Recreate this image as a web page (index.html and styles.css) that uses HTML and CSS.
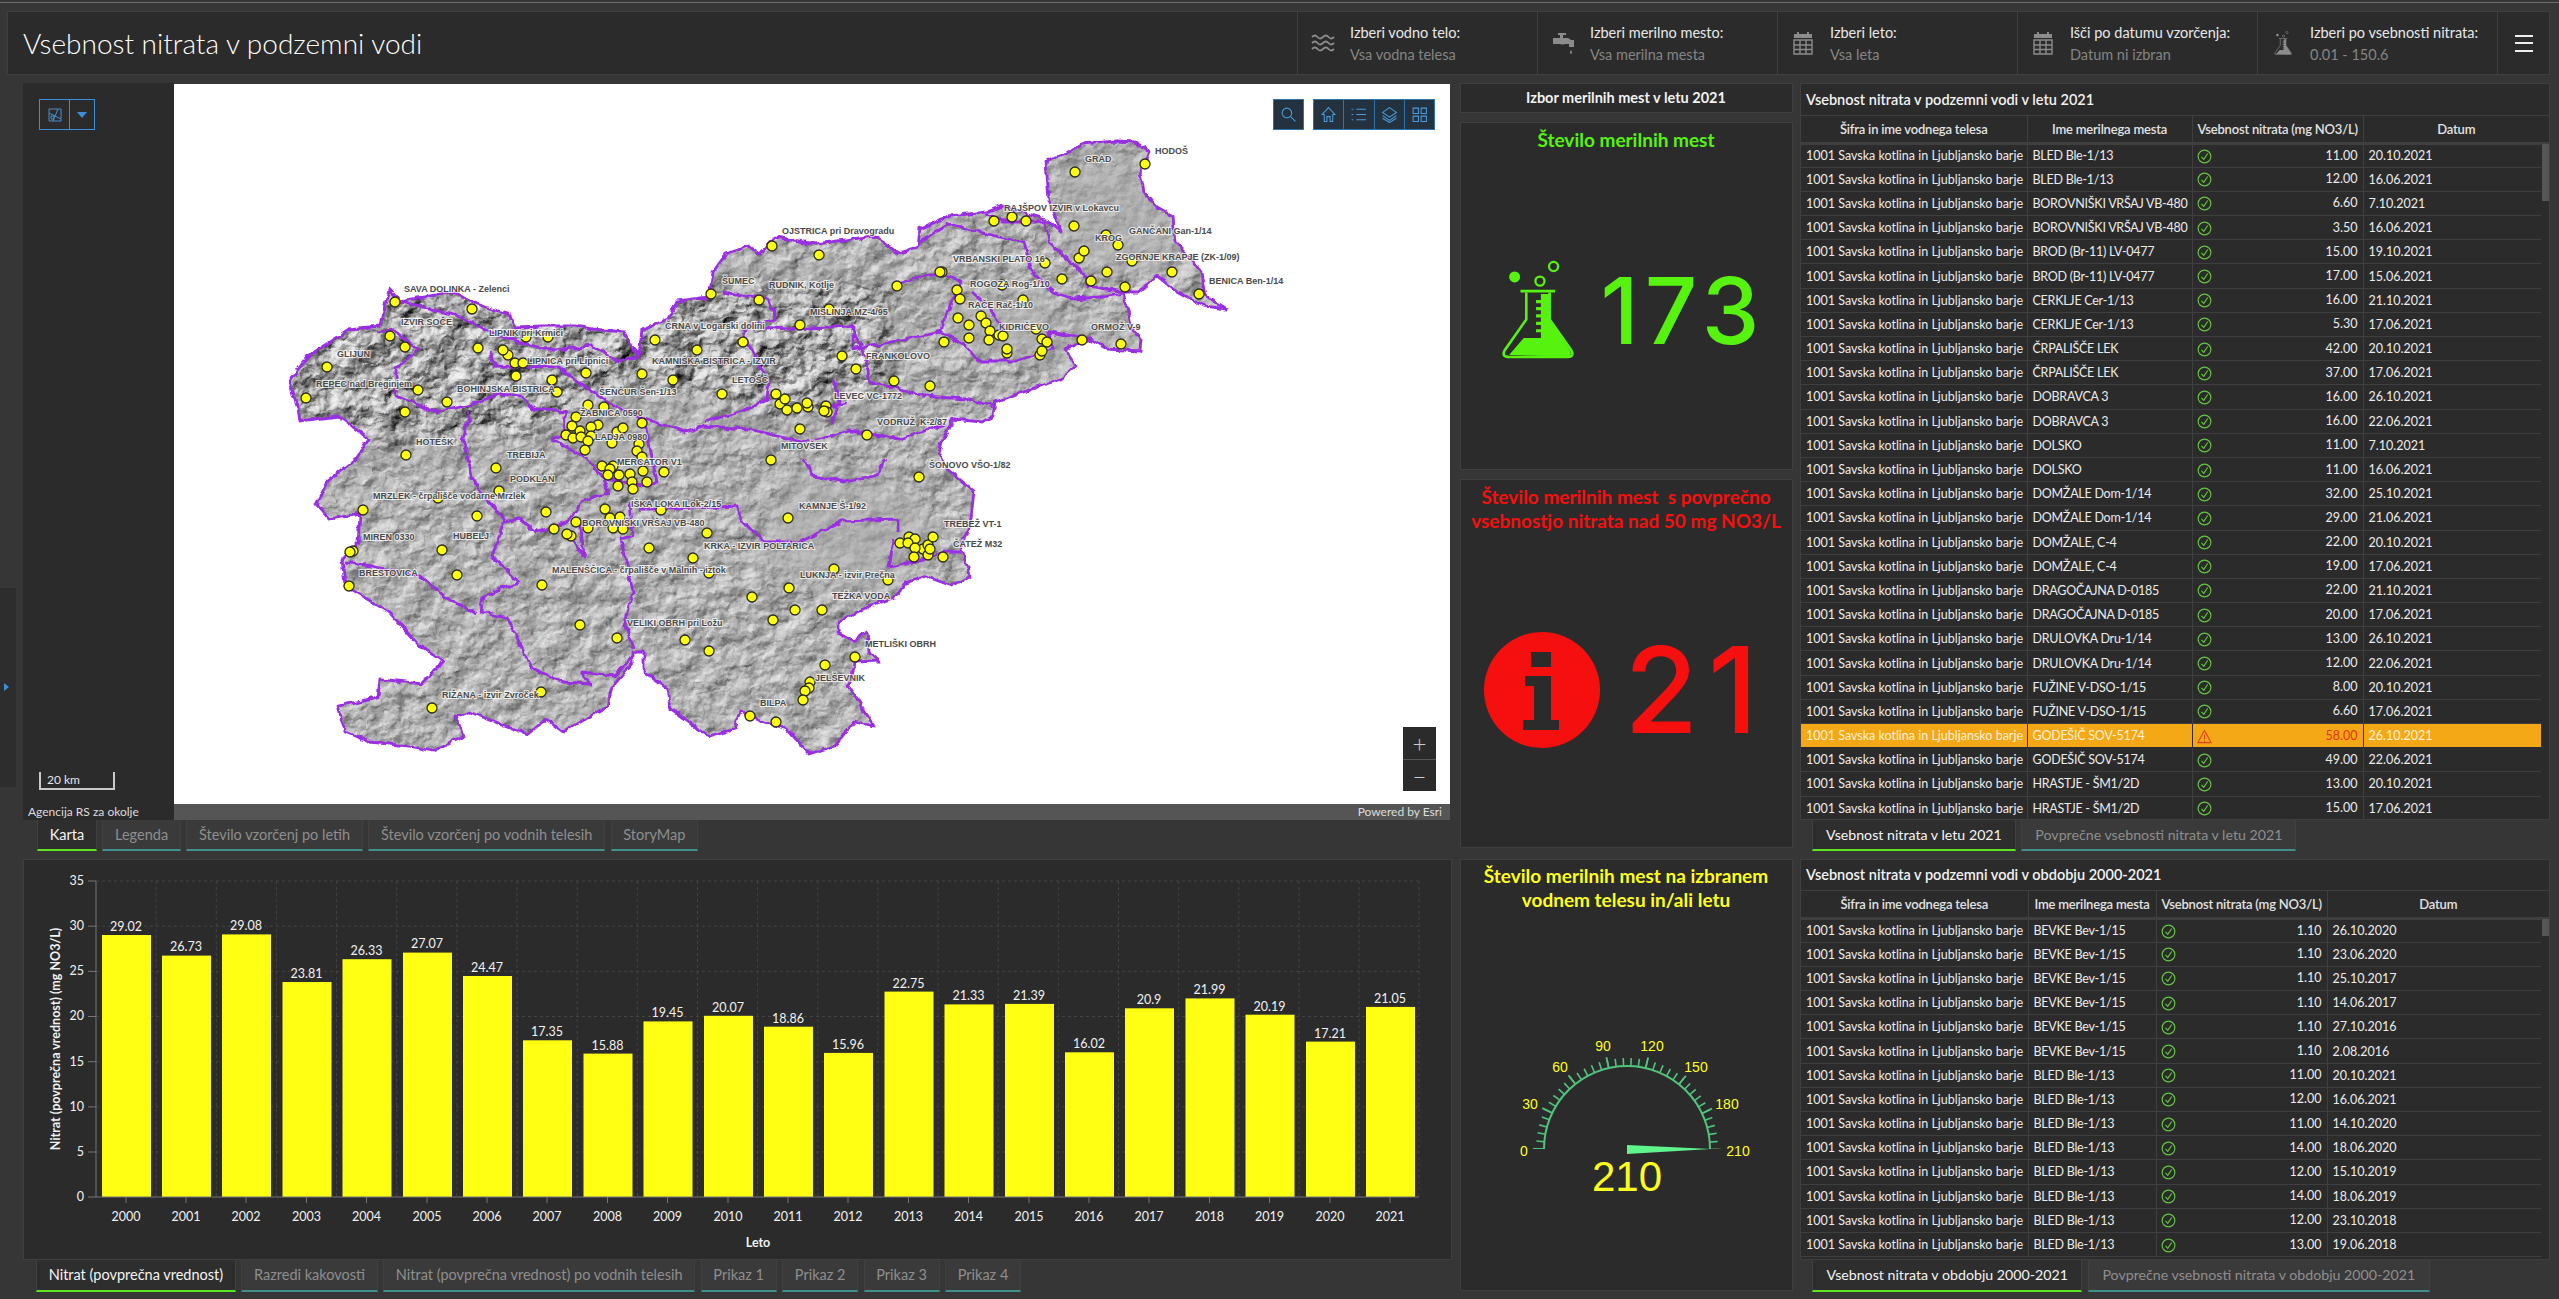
FILE: index.html
```html
<!DOCTYPE html>
<html lang="sl">
<head>
<meta charset="utf-8">
<title>Vsebnost nitrata v podzemni vodi</title>
<link rel="stylesheet" href="styles.css">
</head>
<body>
<svg class="defs" aria-hidden="true">
  <symbol id="ok" viewBox="0 0 16 16"><circle cx="8" cy="8" r="6.8" fill="none" stroke="#63c93b" stroke-width="1.2"/><path d="M4.800 8.400 7.200 11 11.400 4.800" fill="none" stroke="#63c93b" stroke-width="1.2"/></symbol>
  <symbol id="warn" viewBox="0 0 16 16"><path d="M8 1.500 15 14.500H1Z" fill="none" stroke="#e5401c" stroke-width="1.2"/><path d="M8 6v5M8 12v1.200" stroke="#e5401c" stroke-width="1.100"/></symbol>
  <symbol id="flask" viewBox="180 535 225 305">
    <circle cx="222" cy="587" r="17"/>
    <circle cx="342" cy="555" r="14" fill="none" stroke="currentColor" stroke-width="7"/>
    <circle cx="300" cy="600" r="14" fill="none" stroke="currentColor" stroke-width="7"/>
    <path d="M240 627H347V635H240Z"/>
    <path d="M258 635V718L192 812Q180 834 205 834H385Q408 834 396 812L330 718V635" fill="none" stroke="currentColor" stroke-width="8"/>
    <path d="M205 828 250 775H303V758H288V748H303V735H288V725H303V712H288V702H303V690H288V680H303V668H288V658H303V640H330V718L393 815Q400 832 385 832Z"/>
  </symbol>
  <symbol id="cal" viewBox="0 0 20 24"><path d="M1 9H19V23H1ZM1 14H19M1 18.500H19M7 9V23M13 9V23" fill="none" stroke="currentColor" stroke-width="1.400"/><path d="M1 3H4V1H6V3H14V1H16V3H19V7H1Z"/></symbol>
</svg>

<div class="topline"></div>

<header class="hdr">
  <h1 class="hdr-title">Vsebnost nitrata v podzemni vodi</h1>
  <div class="filter">
    <svg class="f-icon" viewBox="0 0 24 18"><path d="M1 3q3-3 5.500 0t5.500 0 5.500 0 5.500 0M1 9q3-3 5.500 0t5.500 0 5.500 0 5.500 0M1 15q3-3 5.500 0t5.500 0 5.500 0 5.500 0" fill="none" stroke="currentColor" stroke-width="1.800"/></svg>
    <div class="f-text"><span class="f-a">Izberi vodno telo:</span><span class="f-b">Vsa vodna telesa</span></div>
  </div>
  <div class="filter">
    <svg class="f-icon" viewBox="0 0 24 24"><path d="M7 2h8v2h-3v3h5l3 2h3v7h-5v-3h-4q-2 1-5 0H2V7h7V4H7Z"/><path d="M20 19q-2 3 0 4 2-1 0-4Z"/></svg>
    <div class="f-text"><span class="f-a">Izberi merilno mesto:</span><span class="f-b">Vsa merilna mesta</span></div>
  </div>
  <div class="filter">
    <svg class="f-icon"><use href="#cal"/></svg>
    <div class="f-text"><span class="f-a">Izberi leto:</span><span class="f-b">Vsa leta</span></div>
  </div>
  <div class="filter">
    <svg class="f-icon"><use href="#cal"/></svg>
    <div class="f-text"><span class="f-a">Išči po datumu vzorčenja:</span><span class="f-b">Datum ni izbran</span></div>
  </div>
  <div class="filter">
    <svg class="f-icon"><use href="#flask"/></svg>
    <div class="f-text"><span class="f-a">Izberi po vsebnosti nitrata:</span><span class="f-b">0.01 - 150.6</span></div>
  </div>
  <div class="menu"><i></i><i></i><i></i></div>
</header>

<div class="handle"><i></i></div>

<main class="main">
  <section class="col col-left">
    <div class="mapblock">
      <div class="mapside">
        <div class="scalebar">20 km</div>
      </div>
      <div class="mapview">
        <svg class="mapsvg" viewBox="174 85 1276 720" aria-label="Zemljevid Slovenije">
          <defs>
            <filter id="hill" color-interpolation-filters="sRGB" x="0" y="0" width="1" height="1"><feTurbulence type="fractalNoise" baseFrequency=".04 .05" numOctaves="4" seed="11" result="t"/><feDiffuseLighting in="t" surfaceScale="3.200" diffuseConstant=".95" lighting-color="#fff"><feDistantLight azimuth="225" elevation="47"/></feDiffuseLighting></filter>
            <filter id="hill2" color-interpolation-filters="sRGB" x="0" y="0" width="1" height="1"><feTurbulence type="fractalNoise" baseFrequency=".035 .045" numOctaves="4" seed="4" result="t"/><feDiffuseLighting in="t" surfaceScale="7" diffuseConstant=".95" lighting-color="#fff"><feDistantLight azimuth="225" elevation="45"/></feDiffuseLighting></filter>
            <filter id="wob" filterUnits="userSpaceOnUse" x="174" y="85" width="1276" height="720"><feTurbulence type="fractalNoise" baseFrequency=".12" numOctaves="2" seed="3" result="n"/><feDisplacementMap in="SourceGraphic" in2="n" scale="6" xChannelSelector="R" yChannelSelector="G"/></filter>
            <filter id="soft"><feGaussianBlur stdDeviation="14"/></filter>
            <path id="si" d="M389 290 400 302 454 293 476 305 508 315 514 328 543 327 575 327 592 330 624 333 633 350 639 357 642 330 668 320 677 302 709 298 713 273 726 255 749 247 760 255 775 238 816 245 874 237 898 254 918 248 920 230 949 217 987 213 1003 207 1045 220 1061 233 1049 203 1046 162 1069 153 1082 145 1117 142 1134 143 1149 153 1140 173 1144 193 1157 208 1173 217 1175 243 1192 260 1202 273 1206 297 1227 310 1204 307 1173 290 1157 277 1138 293 1123 293 1128 313 1132 330 1141 340 1140 352 1107 350 1090 340 1065 350 1076 367 1061 380 1032 390 995 403 993 417 982 423 953 420 943 440 939 453 947 470 974 492 970 527 961 547 970 577 952 587 925 577 903 585 898 597 863 610 838 623 838 633 854 642 867 633 869 652 880 662 854 663 849 687 874 727 854 723 834 747 809 755 787 730 764 723 740 712 735 730 709 738 671 710 668 690 644 673 644 653 633 653 633 663 613 687 608 707 563 733 546 720 528 735 505 727 470 713 456 717 463 737 432 752 409 747 369 743 345 733 338 707 378 698 380 680 421 685 443 663 416 643 389 613 345 587 342 560 358 543 360 515 329 520 316 505 327 483 356 460 369 440 338 417 300 422 298 410 289 383 307 358 349 330 380 327Z"/>
            <clipPath id="siclip"><use href="#si"/></clipPath>
            <mask id="alps" maskUnits="userSpaceOnUse" x="174" y="85" width="1276" height="720"><path class="mask-w" d="M280 280H900V390L800 430 640 390 520 450 360 450 280 420Z"/></mask>
          </defs>
          <g filter="url(#wob)">
            <g clip-path="url(#siclip)">
              <rect class="relief-a" x="270" y="130" width="980" height="640"/>
              <g mask="url(#alps)"><rect class="relief-b" x="270" y="130" width="980" height="640"/></g>
              <g class="plains">
                <path d="M950 300 1040 290 1055 330 1130 320 1110 350 1000 360 950 340Z"/>
                <path d="M1050 170 1140 150 1190 270 1080 270Z"/>
                <path d="M590 410 640 420 650 480 610 490 575 450Z"/>
                <path d="M780 480 880 480 940 530 870 600 760 560Z"/>
              </g>
            </g>
            <use class="border" href="#si"/>
            <path class="border" d="M400 302 458 317 499 337 521 343 543 350 566 350 592 347 619 363 637 358M490 353 494 367 557 368 592 393 615 407 644 420 686 433 704 427 749 430 802 443 850 432 900 440 945 425M378 333 392 330 418 350 396 370 396 397 436 413 476 405 499 395 521 397 534 410 566 413 561 437 552 440 588 460 604 480 648 487 657 483 644 420M470 413 463 440 472 477 483 497 505 520 492 557 519 583 483 597 481 613 508 620 532 670 563 683 590 685 581 673 615 677 633 657M345 563 371 567 421 577 443 597 476 615M503 523 519 520 537 533 568 523 581 503 608 493 604 480M572 540 584 558 580 520M630 503 633 537 621 540 628 570 633 593 624 623 633 650M640 510 671 510 738 507 740 520 764 543 800 543 842 522 898 520 898 533M894 540 889 568 916 563 943 553 961 553M804 460 813 477 845 483 876 477 885 460M722 293 769 300 776 320 747 327 744 337 769 383 767 400 744 412 704 423M747 327 789 330 851 327 865 357 870 383 924 397 966 400 993 407M897 285 924 277 941 275 962 283 945 317 941 333 854 350 854 327M941 333 966 347 978 362 1016 362 1053 350 1049 333 1090 340M920 243 949 225 999 238 1024 243 1032 273 1053 293 1074 300 1099 298 1123 293M987 215 1003 223 1045 223 1049 243 1082 273 1090 287 1123 293M972 293 991 310 1007 337M833 380 840 400 832 425M820 410 845 405"/>
          </g>
          <g class="pts">
            <circle cx="395" cy="303"/><circle cx="472" cy="310"/><circle cx="390" cy="337"/><circle cx="405" cy="348"/><circle cx="327" cy="368"/><circle cx="306" cy="399"/><circle cx="418" cy="391"/><circle cx="447" cy="403"/><circle cx="405" cy="413"/><circle cx="478" cy="349"/><circle cx="526" cy="338"/><circle cx="548" cy="338"/><circle cx="508" cy="356"/><circle cx="503" cy="351"/><circle cx="515" cy="364"/><circle cx="523" cy="364"/><circle cx="516" cy="377"/><circle cx="552" cy="381"/><circle cx="557" cy="393"/><circle cx="586" cy="374"/><circle cx="642" cy="375"/><circle cx="673" cy="381"/><circle cx="655" cy="341"/><circle cx="697" cy="351"/><circle cx="743" cy="343"/><circle cx="711" cy="295"/><circle cx="759" cy="301"/><circle cx="772" cy="247"/><circle cx="819" cy="256"/><circle cx="800" cy="326"/><circle cx="829" cy="310"/><circle cx="897" cy="287"/><circle cx="942" cy="273"/><circle cx="940" cy="273"/><circle cx="842" cy="357"/><circle cx="856" cy="370"/><circle cx="894" cy="382"/><circle cx="930" cy="387"/><circle cx="722" cy="395"/><circle cx="776" cy="395"/><circle cx="780" cy="405"/><circle cx="785" cy="400"/><circle cx="787" cy="411"/><circle cx="797" cy="409"/><circle cx="808" cy="408"/><circle cx="807" cy="404"/><circle cx="826" cy="407"/><circle cx="827" cy="413"/><circle cx="824" cy="412"/><circle cx="800" cy="430"/><circle cx="867" cy="436"/><circle cx="771" cy="461"/><circle cx="919" cy="478"/><circle cx="588" cy="406"/><circle cx="604" cy="408"/><circle cx="576" cy="418"/><circle cx="572" cy="427"/><circle cx="598" cy="426"/><circle cx="642" cy="424"/><circle cx="617" cy="433"/><circle cx="623" cy="429"/><circle cx="591" cy="428"/><circle cx="580" cy="432"/><circle cx="566" cy="436"/><circle cx="573" cy="439"/><circle cx="591" cy="437"/><circle cx="581" cy="438"/><circle cx="588" cy="442"/><circle cx="612" cy="444"/><circle cx="639" cy="445"/><circle cx="637" cy="452"/><circle cx="585" cy="451"/><circle cx="642" cy="458"/><circle cx="602" cy="467"/><circle cx="613" cy="467"/><circle cx="610" cy="470"/><circle cx="643" cy="472"/><circle cx="664" cy="473"/><circle cx="608" cy="476"/><circle cx="619" cy="476"/><circle cx="630" cy="475"/><circle cx="406" cy="456"/><circle cx="496" cy="469"/>
            <circle cx="1145" cy="165"/><circle cx="1075" cy="173"/><circle cx="994" cy="222"/><circle cx="1012" cy="218"/><circle cx="1026" cy="222"/><circle cx="1074" cy="227"/><circle cx="1106" cy="236"/><circle cx="1118" cy="246"/><circle cx="1079" cy="259"/><circle cx="1084" cy="252"/><circle cx="1045" cy="264"/><circle cx="1062" cy="280"/><circle cx="1091" cy="282"/><circle cx="1107" cy="273"/><circle cx="1132" cy="262"/><circle cx="1172" cy="273"/><circle cx="1125" cy="288"/><circle cx="1199" cy="295"/><circle cx="1002" cy="286"/><circle cx="957" cy="291"/><circle cx="960" cy="300"/><circle cx="1023" cy="301"/><circle cx="958" cy="319"/><circle cx="969" cy="326"/><circle cx="981" cy="317"/><circle cx="986" cy="324"/><circle cx="990" cy="332"/><circle cx="969" cy="339"/><circle cx="989" cy="341"/><circle cx="944" cy="343"/><circle cx="999" cy="336"/><circle cx="1003" cy="337"/><circle cx="1036" cy="330"/><circle cx="1042" cy="340"/><circle cx="1047" cy="343"/><circle cx="1007" cy="354"/><circle cx="1007" cy="350"/><circle cx="1040" cy="356"/><circle cx="1042" cy="352"/><circle cx="1082" cy="341"/><circle cx="1121" cy="345"/>
            <circle cx="632" cy="483"/><circle cx="647" cy="483"/><circle cx="618" cy="487"/><circle cx="633" cy="490"/><circle cx="499" cy="492"/><circle cx="438" cy="499"/><circle cx="363" cy="511"/><circle cx="477" cy="517"/><circle cx="546" cy="513"/><circle cx="605" cy="510"/><circle cx="661" cy="511"/><circle cx="610" cy="519"/><circle cx="620" cy="518"/><circle cx="576" cy="523"/><circle cx="554" cy="530"/><circle cx="571" cy="537"/><circle cx="567" cy="535"/><circle cx="588" cy="529"/><circle cx="613" cy="529"/><circle cx="623" cy="530"/><circle cx="649" cy="549"/><circle cx="707" cy="534"/><circle cx="788" cy="519"/><circle cx="693" cy="559"/><circle cx="709" cy="574"/><circle cx="834" cy="570"/><circle cx="888" cy="581"/><circle cx="789" cy="589"/><circle cx="752" cy="598"/><circle cx="795" cy="611"/><circle cx="822" cy="611"/><circle cx="773" cy="621"/><circle cx="855" cy="658"/><circle cx="825" cy="666"/><circle cx="810" cy="683"/><circle cx="809" cy="689"/><circle cx="805" cy="692"/><circle cx="803" cy="701"/><circle cx="776" cy="723"/><circle cx="750" cy="717"/><circle cx="685" cy="641"/><circle cx="709" cy="652"/><circle cx="617" cy="639"/><circle cx="580" cy="626"/><circle cx="542" cy="586"/><circle cx="457" cy="576"/><circle cx="442" cy="551"/><circle cx="353" cy="552"/><circle cx="350" cy="553"/><circle cx="349" cy="587"/><circle cx="432" cy="709"/><circle cx="541" cy="693"/>
            <circle cx="900" cy="544"/><circle cx="909" cy="538"/><circle cx="915" cy="540"/><circle cx="908" cy="544"/><circle cx="923" cy="550"/><circle cx="915" cy="549"/><circle cx="928" cy="546"/><circle cx="933" cy="538"/><circle cx="928" cy="556"/><circle cx="930" cy="550"/><circle cx="914" cy="558"/><circle cx="943" cy="558"/>
          </g>
          <g class="lbl">
            <text x="404" y="293">SAVA DOLINKA - Zelenci</text><text x="401" y="326">IZVIR SOČE</text><text x="337" y="358">GLIJUN</text><text x="316" y="388">REPEC nad Breginjem</text><text x="489" y="337">LIPNIK pri Krmici</text><text x="527" y="365">LIPNICA pri Lipnici</text><text x="457" y="393">BOHINJSKA BISTRICA</text><text x="665" y="330">ČRNA v Logarski dolini</text><text x="652" y="365">KAMNIŠKA BISTRICA - IZVIR</text><text x="722" y="285">ŠUMEC</text><text x="769" y="289">RUDNIK, Kotlje</text><text x="782" y="235">OJSTRICA pri Dravogradu</text><text x="810" y="316">MISLINJA MZ-4/95</text><text x="732" y="384">LETOŠČ</text><text x="866" y="360">FRANKOLOVO</text><text x="834" y="400">LEVEC VC-1772</text><text x="877" y="426">VODRUŽ  K-2/87</text><text x="781" y="450">MITOVŠEK</text><text x="599" y="396">ŠENČUR Šen-1/13</text><text x="580" y="417">ŽABNICA 0590</text><text x="595" y="441">LADJA 0980</text><text x="617" y="466">MERCATOR V1</text><text x="416" y="446">HOTEŠK</text><text x="507" y="459">TREBIJA</text><text x="510" y="483">PODKLAN</text><text x="929" y="469">ŠONOVO VŠO-1/82</text>
            <text x="1155" y="155">HODOŠ</text><text x="1085" y="163">GRAD</text><text x="1004" y="212">RAJŠPOV IZVIR v Lokavcu</text><text x="1095" y="242">KROG</text><text x="1129" y="235">GANČANI Gan-1/14</text><text x="953" y="263">VRBANSKI PLATO 16</text><text x="1116" y="261">ZGORNJE KRAPJE (ZK-1/09)</text><text x="970" y="288">ROGOZA Rog-1/10</text><text x="1209" y="285">BENICA Ben-1/14</text><text x="968" y="309">RAČE Rač-1/10</text><text x="999" y="331">KIDRIČEVO</text><text x="1091" y="331">ORMOŽ V-9</text>
            <text x="373" y="500">MRZLEK - črpališče vodarne Mrzlek</text><text x="631" y="508">IŠKA LOKA ILok-2/15</text><text x="799" y="510">KAMNJE Š-1/92</text><text x="582" y="527">BOROVNIŠKI VRŠAJ VB-480</text><text x="944" y="528">TREBEŽ VT-1</text><text x="363" y="541">MIREN 0330</text><text x="453" y="540">HUBELJ</text><text x="704" y="550">KRKA - IZVIR POLTARICA</text><text x="953" y="548">ČATEŽ M32</text><text x="359" y="577">BRESTOVICA</text><text x="552" y="574">MALENŠČICA - črpališče v Malnih - iztok</text><text x="800" y="579">LUKNJA - izvir Prečna</text><text x="832" y="600">TEŽKA VODA</text><text x="627" y="627">VELIKI OBRH pri Ložu</text><text x="865" y="648">METLIŠKI OBRH</text><text x="815" y="682">JELŠEVNIK</text><text x="442" y="699">RIŽANA - izvir Zvroček</text><text x="760" y="707">BILPA</text>
          </g>
        </svg>
        <div class="tb tb-search">
          <span class="tb-cell"><svg viewBox="0 0 16 16"><circle cx="6.500" cy="6.500" r="4.500"/><path d="M10 10l4.500 4.500"/></svg></span>
        </div>
        <div class="tb tb-main">
          <span class="tb-cell"><svg viewBox="0 0 16 16"><path d="M8 1.500 14 8h-2v6.500H9.500V10h-3v4.500H4V8H2Z"/></svg></span>
          <span class="tb-cell"><svg viewBox="0 0 16 16"><path d="M6 3h9M6 8h9M6 13h9M1.500 3h1.500M1.500 8h1.500M1.500 13h1.500"/></svg></span>
          <span class="tb-cell"><svg viewBox="0 0 16 16"><path d="M8 1.500 14.500 6 8 10.500 1.500 6ZM1.500 9 8 13.500 14.500 9M1.500 11.500 8 15.500 14.500 11.500"/></svg></span>
          <span class="tb-cell"><svg viewBox="0 0 16 16"><path d="M2 2h5v5H2ZM9.500 2h5v5h-5ZM2 9.500h5v5H2ZM9.500 9.500h5v5h-5Z"/></svg></span>
        </div>
        <div class="zoomctl"><span>+</span><span>−</span></div>
      </div>
      <div class="tb-left">
        <span class="tbl-a"><svg viewBox="0 0 16 16"><path d="M2 2h12v12H2ZM2 6l12 6M6 14 11 2M4 9h3v3H4Z"/></svg></span>
        <span class="tbl-b"></span>
      </div>
      <div class="attrib-a">Agencija RS za okolje</div>
      <div class="attrib-b">Powered by Esri</div>
    </div>
    <nav class="tabs tabs-map">
      <span class="tab on">Karta</span><span class="tab">Legenda</span><span class="tab">Število vzorčenj po letih</span><span class="tab">Število vzorčenj po vodnih telesih</span><span class="tab">StoryMap</span>
    </nav>
    <div class="panel chartpanel">
      <svg class="chart" viewBox="23 860 1429 401">
        <g class="grid">
          <path d="M96 882H1419M96 927.200H1419M96 972.400H1419M96 1017.500H1419M96 1062.700H1419M96 1107.900H1419M96 1153H1419"/>
          <path d="M156.100 882V1198M216.300 882V1198M276.400 882V1198M336.600 882V1198M396.700 882V1198M456.900 882V1198M517 882V1198M577.200 882V1198M637.300 882V1198M697.500 882V1198M757.600 882V1198M817.800 882V1198M877.900 882V1198M938.100 882V1198M998.200 882V1198M1058.400 882V1198M1118.500 882V1198M1178.700 882V1198M1238.800 882V1198M1299 882V1198M1359.100 882V1198M1419 882V1198"/>
        </g>
        <g class="bars">
          <rect x="102" y="936" width="49" height="262"/><rect x="162" y="956.600" width="49" height="241.400"/><rect x="222" y="935.400" width="49" height="262.600"/><rect x="282.500" y="983" width="49" height="215"/><rect x="342.500" y="960.200" width="49" height="237.800"/><rect x="403" y="953.600" width="49" height="244.400"/><rect x="463" y="977" width="49" height="221"/><rect x="523" y="1041.300" width="49" height="156.700"/><rect x="583.500" y="1054.600" width="49" height="143.400"/><rect x="643.500" y="1022.400" width="49" height="175.600"/><rect x="704" y="1016.800" width="49" height="181.200"/><rect x="764" y="1027.700" width="49" height="170.300"/><rect x="824" y="1053.900" width="49" height="144.100"/><rect x="884.500" y="992.600" width="49" height="205.400"/><rect x="944.500" y="1005.400" width="49" height="192.600"/><rect x="1005" y="1004.900" width="49" height="193.100"/><rect x="1065" y="1053.300" width="49" height="144.700"/><rect x="1125" y="1009.300" width="49" height="188.700"/><rect x="1185.500" y="999.400" width="49" height="198.600"/><rect x="1245.500" y="1015.700" width="49" height="182.300"/><rect x="1306" y="1042.600" width="49" height="155.400"/><rect x="1366" y="1007.900" width="49" height="190.100"/>
        </g>
        <path class="axis" d="M96 882V1198H1419M88 882H96M88 927.200H96M88 972.400H96M88 1017.500H96M88 1062.700H96M88 1107.900H96M88 1153H96M88 1198H96M126 1198v6M186 1198v6M246 1198v6M306.500 1198v6M366.500 1198v6M427 1198v6M487 1198v6M547 1198v6M607.500 1198v6M667.500 1198v6M728 1198v6M788 1198v6M848 1198v6M908.500 1198v6M968.500 1198v6M1029 1198v6M1089 1198v6M1149 1198v6M1209.500 1198v6M1269.500 1198v6M1330 1198v6M1390 1198v6"/>
        <g class="vals">
          <text x="126" y="932">29.02</text><text x="186" y="952">26.73</text><text x="246" y="931">29.08</text><text x="306.500" y="979">23.81</text><text x="366.500" y="956">26.33</text><text x="427" y="949">27.07</text><text x="487" y="973">24.47</text><text x="547" y="1037">17.35</text><text x="607.500" y="1051">15.88</text><text x="667.500" y="1018">19.45</text><text x="728" y="1013">20.07</text><text x="788" y="1024">18.86</text><text x="848" y="1050">15.96</text><text x="908.500" y="989">22.75</text><text x="968.500" y="1001">21.33</text><text x="1029" y="1001">21.39</text><text x="1089" y="1049">16.02</text><text x="1149" y="1005">20.9</text><text x="1209.500" y="995">21.99</text><text x="1269.500" y="1012">20.19</text><text x="1330" y="1039">17.21</text><text x="1390" y="1004">21.05</text>
        </g>
        <g class="yl">
          <text x="84" y="886">35</text><text x="84" y="931">30</text><text x="84" y="976">25</text><text x="84" y="1021">20</text><text x="84" y="1067">15</text><text x="84" y="1112">10</text><text x="84" y="1157">5</text><text x="84" y="1202">0</text>
        </g>
        <g class="xl">
          <text x="126" y="1222">2000</text><text x="186" y="1222">2001</text><text x="246" y="1222">2002</text><text x="306.500" y="1222">2003</text><text x="366.500" y="1222">2004</text><text x="427" y="1222">2005</text><text x="487" y="1222">2006</text><text x="547" y="1222">2007</text><text x="607.500" y="1222">2008</text><text x="667.500" y="1222">2009</text><text x="728" y="1222">2010</text><text x="788" y="1222">2011</text><text x="848" y="1222">2012</text><text x="908.500" y="1222">2013</text><text x="968.500" y="1222">2014</text><text x="1029" y="1222">2015</text><text x="1089" y="1222">2016</text><text x="1149" y="1222">2017</text><text x="1209.500" y="1222">2018</text><text x="1269.500" y="1222">2019</text><text x="1330" y="1222">2020</text><text x="1390" y="1222">2021</text>
        </g>
        <text class="axt" x="758" y="1248">Leto</text>
        <text class="axt" transform="translate(60 1040) rotate(-90)">Nitrat (povprečna vrednost) (mg NO3/L)</text>
      </svg>
    </div>
    <nav class="tabs tabs-chart">
      <span class="tab on">Nitrat (povprečna vrednost)</span><span class="tab">Razredi kakovosti</span><span class="tab">Nitrat (povprečna vrednost) po vodnih telesih</span><span class="tab">Prikaz 1</span><span class="tab">Prikaz 2</span><span class="tab">Prikaz 3</span><span class="tab">Prikaz 4</span>
    </nav>
  </section>

  <section class="col col-mid">
    <div class="panel izbor">Izbor merilnih mest v letu 2021</div>
    <div class="panel stat stat-green">
      <h2 class="stat-title">Število merilnih mest</h2>
      <div class="stat-body">
        <svg class="stat-icon flask"><use href="#flask"/></svg>
        <span class="num num-green">173</span>
      </div>
    </div>
    <div class="panel stat stat-red">
      <h2 class="stat-title">Število merilnih mest  s povprečno
vsebnostjo nitrata nad 50 mg NO3/L</h2>
      <div class="stat-body">
        <svg class="stat-icon info" viewBox="0 0 116 116"><circle cx="58" cy="58" r="58"/><path class="info-i" d="M47 20h20v15H47ZM41 44h26v44h8v10H39V88h11V54H41Z"/></svg>
        <span class="num num-red">21</span>
      </div>
    </div>
    <div class="panel stat stat-yellow">
      <h2 class="stat-title">Število merilnih mest na izbranem
vodnem telesu in/ali letu</h2>
      <svg class="gauge" viewBox="1461 1030 331 170">
        <path class="g-arc" d="M1544 1150A83 83 0 0 1 1710 1150"/>
        <path class="g-minor" d="M1540 1150A87 87 0 0 1 1714 1150"/>
        <path class="g-major" d="M1538.500 1150A88.500 88.500 0 0 1 1715.500 1150"/>
        <path class="g-needle" d="M1627 1146 1711 1150 1627 1155Z"/>
        <g class="g-lab">
          <text x="1524" y="1157">0</text><text x="1530" y="1110">30</text><text x="1560" y="1073">60</text><text x="1603" y="1052">90</text><text x="1652" y="1052">120</text><text x="1696" y="1073">150</text><text x="1727" y="1110">180</text><text x="1738" y="1157">210</text>
        </g>
        <text class="g-val" x="1627" y="1192">210</text>
      </svg>
    </div>
  </section>

  <section class="col col-right">
    <div class="panel tpanel tpanel-a">
      <h3 class="tp-title">Vsebnost nitrata v podzemni vodi v letu 2021</h3>
      <div class="scroll"><i></i></div>
      <table class="dt dt-a">
        <thead><tr><th>Šifra in ime vodnega telesa</th><th>Ime merilnega mesta</th><th>Vsebnost nitrata (mg NO3/L)</th><th>Datum</th></tr></thead>
        <tbody>
          <tr><td>1001 Savska kotlina in Ljubljansko barje</td><td>BLED Ble-1/13</td><td class="v"><svg class="ic"><use href="#ok"/></svg>11.00</td><td>20.10.2021</td></tr>
          <tr><td>1001 Savska kotlina in Ljubljansko barje</td><td>BLED Ble-1/13</td><td class="v"><svg class="ic"><use href="#ok"/></svg>12.00</td><td>16.06.2021</td></tr>
          <tr><td>1001 Savska kotlina in Ljubljansko barje</td><td>BOROVNIŠKI VRŠAJ VB-480</td><td class="v"><svg class="ic"><use href="#ok"/></svg>6.60</td><td>7.10.2021</td></tr>
          <tr><td>1001 Savska kotlina in Ljubljansko barje</td><td>BOROVNIŠKI VRŠAJ VB-480</td><td class="v"><svg class="ic"><use href="#ok"/></svg>3.50</td><td>16.06.2021</td></tr>
          <tr><td>1001 Savska kotlina in Ljubljansko barje</td><td>BROD (Br-11) LV-0477</td><td class="v"><svg class="ic"><use href="#ok"/></svg>15.00</td><td>19.10.2021</td></tr>
          <tr><td>1001 Savska kotlina in Ljubljansko barje</td><td>BROD (Br-11) LV-0477</td><td class="v"><svg class="ic"><use href="#ok"/></svg>17.00</td><td>15.06.2021</td></tr>
          <tr><td>1001 Savska kotlina in Ljubljansko barje</td><td>CERKLJE Cer-1/13</td><td class="v"><svg class="ic"><use href="#ok"/></svg>16.00</td><td>21.10.2021</td></tr>
          <tr><td>1001 Savska kotlina in Ljubljansko barje</td><td>CERKLJE Cer-1/13</td><td class="v"><svg class="ic"><use href="#ok"/></svg>5.30</td><td>17.06.2021</td></tr>
          <tr><td>1001 Savska kotlina in Ljubljansko barje</td><td>ČRPALIŠČE LEK</td><td class="v"><svg class="ic"><use href="#ok"/></svg>42.00</td><td>20.10.2021</td></tr>
          <tr><td>1001 Savska kotlina in Ljubljansko barje</td><td>ČRPALIŠČE LEK</td><td class="v"><svg class="ic"><use href="#ok"/></svg>37.00</td><td>17.06.2021</td></tr>
          <tr><td>1001 Savska kotlina in Ljubljansko barje</td><td>DOBRAVCA 3</td><td class="v"><svg class="ic"><use href="#ok"/></svg>16.00</td><td>26.10.2021</td></tr>
          <tr><td>1001 Savska kotlina in Ljubljansko barje</td><td>DOBRAVCA 3</td><td class="v"><svg class="ic"><use href="#ok"/></svg>16.00</td><td>22.06.2021</td></tr>
          <tr><td>1001 Savska kotlina in Ljubljansko barje</td><td>DOLSKO</td><td class="v"><svg class="ic"><use href="#ok"/></svg>11.00</td><td>7.10.2021</td></tr>
          <tr><td>1001 Savska kotlina in Ljubljansko barje</td><td>DOLSKO</td><td class="v"><svg class="ic"><use href="#ok"/></svg>11.00</td><td>16.06.2021</td></tr>
          <tr><td>1001 Savska kotlina in Ljubljansko barje</td><td>DOMŽALE Dom-1/14</td><td class="v"><svg class="ic"><use href="#ok"/></svg>32.00</td><td>25.10.2021</td></tr>
          <tr><td>1001 Savska kotlina in Ljubljansko barje</td><td>DOMŽALE Dom-1/14</td><td class="v"><svg class="ic"><use href="#ok"/></svg>29.00</td><td>21.06.2021</td></tr>
          <tr><td>1001 Savska kotlina in Ljubljansko barje</td><td>DOMŽALE, C-4</td><td class="v"><svg class="ic"><use href="#ok"/></svg>22.00</td><td>20.10.2021</td></tr>
          <tr><td>1001 Savska kotlina in Ljubljansko barje</td><td>DOMŽALE, C-4</td><td class="v"><svg class="ic"><use href="#ok"/></svg>19.00</td><td>17.06.2021</td></tr>
          <tr><td>1001 Savska kotlina in Ljubljansko barje</td><td>DRAGOČAJNA D-0185</td><td class="v"><svg class="ic"><use href="#ok"/></svg>22.00</td><td>21.10.2021</td></tr>
          <tr><td>1001 Savska kotlina in Ljubljansko barje</td><td>DRAGOČAJNA D-0185</td><td class="v"><svg class="ic"><use href="#ok"/></svg>20.00</td><td>17.06.2021</td></tr>
          <tr><td>1001 Savska kotlina in Ljubljansko barje</td><td>DRULOVKA Dru-1/14</td><td class="v"><svg class="ic"><use href="#ok"/></svg>13.00</td><td>26.10.2021</td></tr>
          <tr><td>1001 Savska kotlina in Ljubljansko barje</td><td>DRULOVKA Dru-1/14</td><td class="v"><svg class="ic"><use href="#ok"/></svg>12.00</td><td>22.06.2021</td></tr>
          <tr><td>1001 Savska kotlina in Ljubljansko barje</td><td>FUŽINE V-DSO-1/15</td><td class="v"><svg class="ic"><use href="#ok"/></svg>8.00</td><td>20.10.2021</td></tr>
          <tr><td>1001 Savska kotlina in Ljubljansko barje</td><td>FUŽINE V-DSO-1/15</td><td class="v"><svg class="ic"><use href="#ok"/></svg>6.60</td><td>17.06.2021</td></tr>
          <tr class="hot"><td>1001 Savska kotlina in Ljubljansko barje</td><td>GODEŠIČ SOV-5174</td><td class="v"><svg class="ic"><use href="#warn"/></svg>58.00</td><td>26.10.2021</td></tr>
          <tr><td>1001 Savska kotlina in Ljubljansko barje</td><td>GODEŠIČ SOV-5174</td><td class="v"><svg class="ic"><use href="#ok"/></svg>49.00</td><td>22.06.2021</td></tr>
          <tr><td>1001 Savska kotlina in Ljubljansko barje</td><td>HRASTJE - ŠM1/2D</td><td class="v"><svg class="ic"><use href="#ok"/></svg>13.00</td><td>20.10.2021</td></tr>
          <tr><td>1001 Savska kotlina in Ljubljansko barje</td><td>HRASTJE - ŠM1/2D</td><td class="v"><svg class="ic"><use href="#ok"/></svg>15.00</td><td>17.06.2021</td></tr>
        </tbody>
      </table>
    </div>
    <nav class="tabs tabs-ta">
      <span class="tab on">Vsebnost nitrata v letu 2021</span><span class="tab">Povprečne vsebnosti nitrata v letu 2021</span>
    </nav>
    <div class="panel tpanel tpanel-b">
      <h3 class="tp-title">Vsebnost nitrata v podzemni vodi v obdobju 2000-2021</h3>
      <div class="scroll scroll-b"><i></i></div>
      <table class="dt dt-b">
        <thead><tr><th>Šifra in ime vodnega telesa</th><th>Ime merilnega mesta</th><th>Vsebnost nitrata (mg NO3/L)</th><th>Datum</th></tr></thead>
        <tbody>
          <tr><td>1001 Savska kotlina in Ljubljansko barje</td><td>BEVKE Bev-1/15</td><td class="v"><svg class="ic"><use href="#ok"/></svg>1.10</td><td>26.10.2020</td></tr>
          <tr><td>1001 Savska kotlina in Ljubljansko barje</td><td>BEVKE Bev-1/15</td><td class="v"><svg class="ic"><use href="#ok"/></svg>1.10</td><td>23.06.2020</td></tr>
          <tr><td>1001 Savska kotlina in Ljubljansko barje</td><td>BEVKE Bev-1/15</td><td class="v"><svg class="ic"><use href="#ok"/></svg>1.10</td><td>25.10.2017</td></tr>
          <tr><td>1001 Savska kotlina in Ljubljansko barje</td><td>BEVKE Bev-1/15</td><td class="v"><svg class="ic"><use href="#ok"/></svg>1.10</td><td>14.06.2017</td></tr>
          <tr><td>1001 Savska kotlina in Ljubljansko barje</td><td>BEVKE Bev-1/15</td><td class="v"><svg class="ic"><use href="#ok"/></svg>1.10</td><td>27.10.2016</td></tr>
          <tr><td>1001 Savska kotlina in Ljubljansko barje</td><td>BEVKE Bev-1/15</td><td class="v"><svg class="ic"><use href="#ok"/></svg>1.10</td><td>2.08.2016</td></tr>
          <tr><td>1001 Savska kotlina in Ljubljansko barje</td><td>BLED Ble-1/13</td><td class="v"><svg class="ic"><use href="#ok"/></svg>11.00</td><td>20.10.2021</td></tr>
          <tr><td>1001 Savska kotlina in Ljubljansko barje</td><td>BLED Ble-1/13</td><td class="v"><svg class="ic"><use href="#ok"/></svg>12.00</td><td>16.06.2021</td></tr>
          <tr><td>1001 Savska kotlina in Ljubljansko barje</td><td>BLED Ble-1/13</td><td class="v"><svg class="ic"><use href="#ok"/></svg>11.00</td><td>14.10.2020</td></tr>
          <tr><td>1001 Savska kotlina in Ljubljansko barje</td><td>BLED Ble-1/13</td><td class="v"><svg class="ic"><use href="#ok"/></svg>14.00</td><td>18.06.2020</td></tr>
          <tr><td>1001 Savska kotlina in Ljubljansko barje</td><td>BLED Ble-1/13</td><td class="v"><svg class="ic"><use href="#ok"/></svg>12.00</td><td>15.10.2019</td></tr>
          <tr><td>1001 Savska kotlina in Ljubljansko barje</td><td>BLED Ble-1/13</td><td class="v"><svg class="ic"><use href="#ok"/></svg>14.00</td><td>18.06.2019</td></tr>
          <tr><td>1001 Savska kotlina in Ljubljansko barje</td><td>BLED Ble-1/13</td><td class="v"><svg class="ic"><use href="#ok"/></svg>12.00</td><td>23.10.2018</td></tr>
          <tr><td>1001 Savska kotlina in Ljubljansko barje</td><td>BLED Ble-1/13</td><td class="v"><svg class="ic"><use href="#ok"/></svg>13.00</td><td>19.06.2018</td></tr>
        </tbody>
      </table>
    </div>
    <nav class="tabs tabs-tb">
      <span class="tab on">Vsebnost nitrata v obdobju 2000-2021</span><span class="tab">Povprečne vsebnosti nitrata v obdobju 2000-2021</span>
    </nav>
  </section>
</main>
</body>
</html>
```

FILE: styles.css
```css
* { box-sizing: border-box; }
html, body { margin: 0; height: 1299px; overflow: hidden; }
body {
  position: relative;
  background: #363636;
  color: #fff;
  font-family: "Lato", "Noto Sans", sans-serif;
  padding-top: 2px;
}
.defs { position: absolute; width: 0; height: 0; }
.topline { height: 1px; background: #6c6c6c; }

/* header */
.hdr {
  display: flex;
  height: 64px;
  margin: 8px 9px 0 7px;
  background: #2b2b2b;
  border: 1px solid #3f3f3f;
}
.hdr-title {
  flex: 1;
  margin: 0;
  padding-left: 15px;
  align-self: center;
  font-size: 28px;
  font-weight: 300;
  color: #fff;
}
.filter {
  display: flex;
  align-items: center;
  width: 240px;
  border-left: 1px solid #3f3f3f;
}
.f-icon {
  width: 24px;
  height: 24px;
  margin: 0 15px 0 13px;
  color: #8c8c8c;
  fill: currentColor;
}
.f-text { display: flex; flex-direction: column; gap: 5px; font-size: 14.500px; white-space: nowrap; }
.f-a { color: #e8e8e8; }
.f-b { color: #858585; }
.menu {
  width: 52px;
  border-left: 1px solid #3f3f3f;
  display: flex;
  flex-direction: column;
  align-items: center;
  justify-content: center;
  gap: 5.500px;
}
.menu i { width: 18px; height: 2px; background: #eee; }

/* left edge handle */
.handle {
  position: absolute;
  left: 0;
  top: 588px;
  width: 16px;
  height: 199px;
  background: #2d2d2d;
}
.handle i {
  position: absolute;
  left: 4px;
  top: 95px;
  border-left: 5px solid #3a90d8;
  border-top: 4px solid transparent;
  border-bottom: 4px solid transparent;
}

/* layout */
.main {
  display: grid;
  grid-template-columns: 1429px 333px 750px;
  column-gap: 7.500px;
  margin: 8px 0 0 23px;
}
.col { display: flex; flex-direction: column; }
.panel {
  background: #2b2b2b;
  border: 1px solid #3f3f3f;
}

/* map */
.mapblock {
  position: relative;
  display: grid;
  grid-template-columns: 151px 1276px;
  grid-template-rows: 721px 16px;
  height: 737px;
}
.mapside { position: relative; background: #2b2b2b; grid-row: 1; }
.mapview { position: relative; background: #fff; margin-top: 1px; height: 720px; }
.mapsvg { display: block; width: 1276px; height: 720px; }
.relief-a { filter: url(#hill); }
.relief-b { filter: url(#hill2); }
.mask-w { fill: #fff; filter: url(#soft); }
.plains path { fill: #aeaeae; opacity: .6; filter: url(#soft); }
.border { fill: none; stroke: #9a2fe2; stroke-width: 2.800; stroke-linejoin: round; }
.pts circle { r: 5px; fill: #ffff0a; stroke: #2a2a12; stroke-width: 1.300; }
.lbl text {
  font: bold 9px "Liberation Sans", sans-serif;
  fill: #4a4a4a;
  stroke: rgba(255, 255, 255, .75);
  stroke-width: 2px;
  paint-order: stroke;
  white-space: pre;
}
.scalebar {
  position: absolute;
  left: 16px;
  top: 689px;
  width: 76px;
  height: 18px;
  border: 2px solid #c9c9c9;
  border-top: 0;
  padding-left: 6px;
  font-size: 12px;
  line-height: 16px;
  color: #e6e6e6;
}
.attrib-a {
  grid-column: 1;
  background: #2b2b2b;
  font-size: 12px;
  line-height: 16px;
  padding-left: 5px;
  color: #ddd;
}
.attrib-b {
  grid-column: 2;
  background: #555;
  font-size: 12px;
  line-height: 16px;
  text-align: right;
  padding-right: 8px;
  color: #ddd;
}
.tb {
  position: absolute;
  top: 15px;
  display: flex;
  height: 31px;
  background: #243240;
  border: 1px solid #2f73ad;
}
.tb-search { left: 1099px; width: 31px; }
.tb-main { left: 1139px; width: 122px; }
.tb-cell {
  flex: 1;
  display: flex;
  align-items: center;
  justify-content: center;
  border-left: 1px solid #2f73ad;
}
.tb-cell:first-child { border-left: 0; }
.tb-cell svg { width: 17px; height: 17px; fill: none; stroke: #4a9bdb; stroke-width: 1; }
.zoomctl {
  position: absolute;
  left: 1229px;
  top: 643px;
  width: 33px;
  height: 64px;
  display: flex;
  flex-direction: column;
  background: #2b2b2b;
}
.zoomctl span {
  flex: 1;
  display: flex;
  align-items: center;
  justify-content: center;
  color: #ccc;
  font-size: 24px;
  font-weight: 300;
}
.zoomctl span + span { border-top: 1px solid #555; }
.tb-left {
  position: absolute;
  left: 16px;
  top: 16px;
  display: flex;
  width: 56px;
  height: 31px;
  border: 1px solid #3a90d8;
}
.tbl-a { width: 30px; border-right: 1px solid #3a90d8; display: flex; align-items: center; justify-content: center; }
.tbl-a svg { width: 16px; height: 18px; fill: none; stroke: #4a9bdb; stroke-width: .9; }
.tbl-b { flex: 1; position: relative; }
.tbl-b::after {
  content: "";
  position: absolute;
  left: 7px;
  top: 12px;
  border-top: 6px solid #3a90d8;
  border-left: 5px solid transparent;
  border-right: 5px solid transparent;
}

/* tabs */
.tabs { display: flex; gap: 5.500px; height: 31px; font-size: 14.500px; white-space: nowrap; }
.tab {
  padding: 0 11.700px;
  line-height: 29px;
  color: #8e8e8e;
  background: #3a3a3a;
  border-bottom: 2px solid #3f8f8c;
  border-left: 1px solid #404040;
  border-right: 1px solid #404040;
}
.tab.on { color: #f4f4f4; background: #2e2e2e; border-bottom-color: #5fe51f; }
.tabs-map { margin: 0 0 8px 14px; }
.tabs-chart { margin: 0 0 0 13px; height: 32px; }
.tabs-chart .tab { line-height: 30px; }
.tabs-ta { margin: 0 0 8px 12px; font-size: 14.200px; }
.tabs-ta .tab { padding: 0 13px; }
.tabs-tb { margin: 0 0 0 12px; height: 32px; font-size: 14.200px; }
.tabs-tb .tab { line-height: 30px; padding: 0 13.500px; }

/* chart */
.chartpanel { height: 401px; border-width: 0; box-shadow: inset 0 0 0 1px #3f3f3f; }
.chart { display: block; width: 1429px; height: 401px; }
.chart text { font-family: "Lato", sans-serif; font-size: 12.500px; fill: #f2f2f2; }
.grid path { stroke: #444; fill: none; stroke-dasharray: 3 3; }
.bars rect { fill: #ffff14; }
.axis { fill: none; stroke: #777; }
.vals text, .xl text, .axt { text-anchor: middle; }
.yl text { text-anchor: end; }
.chart .axt { font-weight: 700; font-size: 12.500px; }

/* middle column */
.col-mid { gap: 9px; }
.izbor {
  height: 30px;
  text-align: center;
  font-size: 14.500px;
  font-weight: 700;
  line-height: 28px;
  color: #f2f2f2;
}
.stat { display: flex; flex-direction: column; align-items: center; }
.stat-title {
  margin: 0;
  font-size: 19px;
  font-weight: 700;
  text-align: center;
  white-space: pre-wrap;
}
.stat-green { height: 348px; color: #57f20e; }
.stat-green .stat-title { margin-top: 5px; line-height: 24px; }
.stat-green .stat-body { padding-left: 14px; }
.stat-red { height: 369px; color: #f5100f; margin-bottom: 2px; }
.stat-red .stat-title { margin-top: 5px; line-height: 24px; }
.stat-yellow { height: 432px; color: #ffff1e; }
.stat-yellow .stat-title { margin-top: 4px; line-height: 24px; }
.stat-body { display: flex; align-items: center; flex: 1; }
.stat-icon { display: block; }
.flask { width: 73px; height: 99px; fill: currentColor; margin-top: -2px; }
.info { width: 116px; height: 116px; fill: #f5100f; }
.info-i { fill: #2b2b2b; }
.num { font-family: "Inter", "Lato", sans-serif; line-height: 1; font-weight: 500; }
.num-green { font-size: 92px; margin-left: 27px; letter-spacing: 6px; }
.num-red { font-size: 120px; margin-left: 24px; letter-spacing: 10px; }
.gauge { display: block; width: 331px; height: 170px; margin-top: 117px; }
.g-arc { fill: none; stroke: #4fc47c; stroke-width: 2; }
.g-minor { fill: none; stroke: #4fc47c; stroke-width: 8; stroke-dasharray: 1.600 6.210; stroke-dashoffset: .8; }
.g-major { fill: none; stroke: #4fc47c; stroke-width: 11; stroke-dasharray: 1.800 37.930; stroke-dashoffset: .9; }
.g-needle { fill: #5df58c; }
.g-lab text { font: 14px "Liberation Sans", sans-serif; fill: #ffff1e; text-anchor: middle; }
.g-val { font: 42px "Liberation Sans", sans-serif; fill: #ffff1e; text-anchor: middle; }

/* tables */
.tpanel { position: relative; overflow: hidden; }
.tpanel-a { height: 737px; }
.tpanel-b { height: 401px; }
.tp-title {
  margin: 0;
  height: 32px;
  padding-left: 5px;
  font-size: 14.500px;
  font-weight: 600;
  line-height: 31px;
  color: #f2f2f2;
  border-bottom: 1px solid #3f3f3f;
}
.tpanel-b .tp-title { height: 31px; line-height: 30px; }
.dt {
  table-layout: fixed;
  width: 748px;
  border-collapse: collapse;
  font-size: 12.500px;
}
.dt th {
  height: 27px;
  padding: 0 5px;
  font-weight: 600;
  font-size: 13px;
  letter-spacing: -.2px;
  color: #e2e2e2;
  border-right: 1px solid #3f3f3f;
  border-bottom: 3px solid #3f3f3f;
  white-space: nowrap;
}
.dt td {
  height: 24.200px;
  padding: 0 5px;
  color: #ececec;
  border-right: 1px solid #3f3f3f;
  border-bottom: 1px solid #3f3f3f;
  white-space: nowrap;
  overflow: hidden;
}
.dt td:nth-child(2) { letter-spacing: -.25px; }
.dt th:last-child, .dt td:last-child { border-right: 0; }
.dt-a th:nth-child(1) { width: 226px; }
.dt-a th:nth-child(2) { width: 165px; }
.dt-a th:nth-child(3) { width: 171px; }
.dt-b th:nth-child(1) { width: 227px; }
.dt-b th:nth-child(2) { width: 128px; }
.dt-b th:nth-child(3) { width: 171px; }
.v { text-align: right; }
.ic { float: left; width: 15px; height: 15px; margin: 1px 0 0 -1px; }
.hot td { background: #f5a815; border-color: #2b2b2b; color: #fdf2dc; }
.hot .v { color: #e5301c; }
.scroll {
  position: absolute;
  right: 0;
  top: 60px;
  bottom: 0;
  width: 8px;
  background: #2b2b2b;
  z-index: 1;
}
.scroll i { display: block; height: 57px; background: #565656; margin-left: 1px; }
.scroll-b { top: 59px; }
.scroll-b i { height: 17px; }
```
